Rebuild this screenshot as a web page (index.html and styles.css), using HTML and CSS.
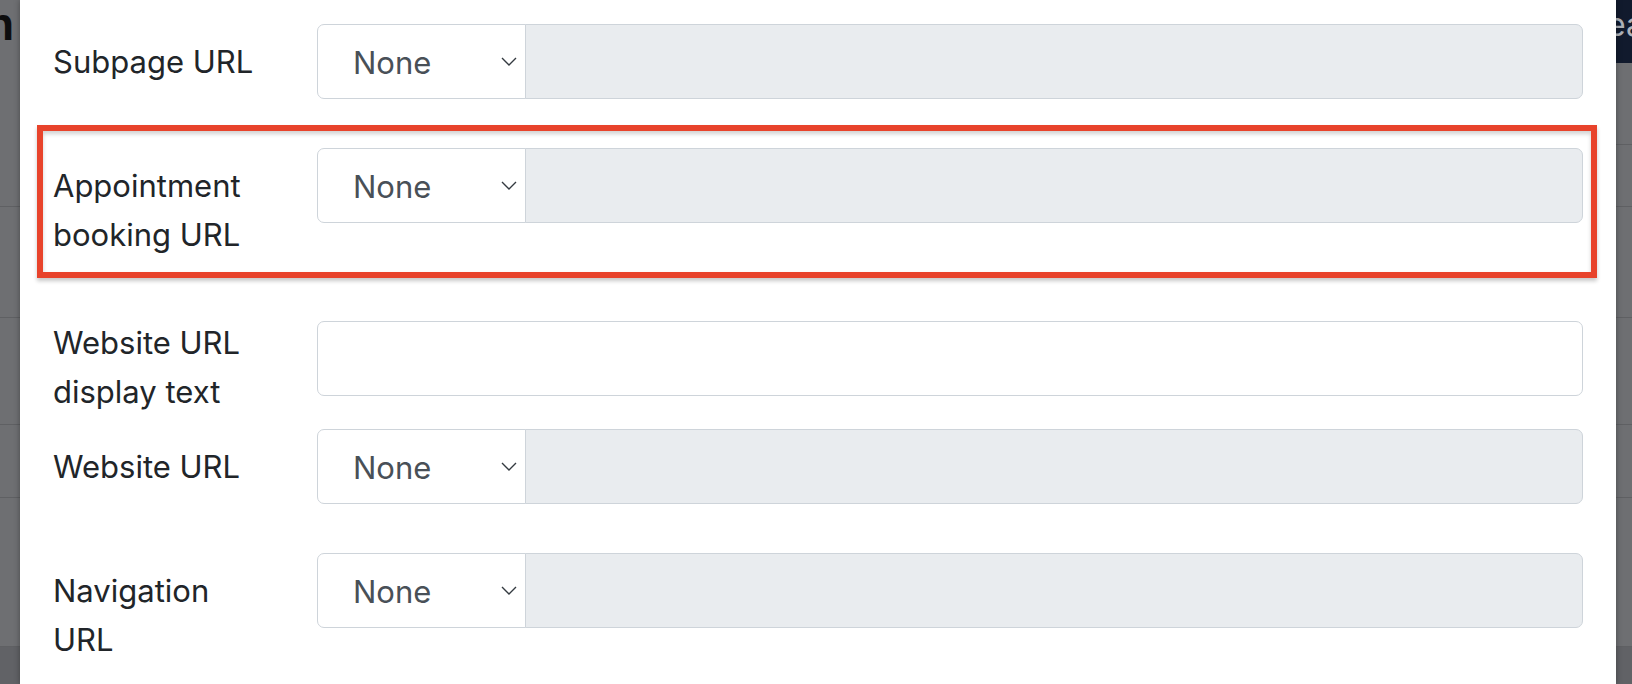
FILE: index.html
```html
<!DOCTYPE html>
<html lang="en">
<head>
<meta charset="utf-8">
<title>Edit links</title>
<link rel="stylesheet" href="styles.css">
</head>
<body>
<div class="page">
  <div class="backdrop backdrop-left">
    <div class="bg-block bg-h207"><span class="bg-heading">n</span></div>
    <div class="bg-block bg-h111"></div>
    <div class="bg-block bg-h107"></div>
    <div class="bg-block bg-h73"></div>
    <div class="bg-block bg-h149"></div>
    <div class="bg-footer"></div>
  </div>

  <div class="modal">
    <div class="form-row">
      <div class="form-label">Subpage URL</div>
      <div class="input-group">
        <div class="select">None<svg class="chevron" viewBox="0 0 16 9" width="16" height="9"><path d="M1 1l7 7 7-7" fill="none" stroke="#343a40" stroke-width="1.4"/></svg></div>
        <div class="addon"></div>
      </div>
    </div>

    <div class="form-row highlighted">
      <div class="form-label">Appointment booking URL</div>
      <div class="input-group">
        <div class="select">None<svg class="chevron" viewBox="0 0 16 9" width="16" height="9"><path d="M1 1l7 7 7-7" fill="none" stroke="#343a40" stroke-width="1.4"/></svg></div>
        <div class="addon"></div>
      </div>
    </div>

    <div class="form-row form-row-tight">
      <div class="form-label form-label-flush">Website URL display text</div>
      <div class="input-group">
        <div class="text-input"></div>
      </div>
    </div>

    <div class="form-row">
      <div class="form-label">Website URL</div>
      <div class="input-group">
        <div class="select">None<svg class="chevron" viewBox="0 0 16 9" width="16" height="9"><path d="M1 1l7 7 7-7" fill="none" stroke="#343a40" stroke-width="1.4"/></svg></div>
        <div class="addon"></div>
      </div>
    </div>

    <div class="form-row">
      <div class="form-label">Navigation URL</div>
      <div class="input-group">
        <div class="select">None<svg class="chevron" viewBox="0 0 16 9" width="16" height="9"><path d="M1 1l7 7 7-7" fill="none" stroke="#343a40" stroke-width="1.4"/></svg></div>
        <div class="addon"></div>
      </div>
    </div>
  </div>

  <div class="backdrop backdrop-right">
    <div class="bg-nav"><span class="bg-nav-text">ea</span></div>
    <div class="bg-block bg-h82"></div>
    <div class="bg-block bg-h62"></div>
    <div class="bg-block bg-h111"></div>
    <div class="bg-block bg-h107"></div>
    <div class="bg-block bg-h73"></div>
    <div class="bg-block bg-h149"></div>
    <div class="bg-footer"></div>
  </div>
</div>
</body>
</html>
```

FILE: styles.css
```css
html, body {
  margin: 0;
  padding: 0;
}

body {
  width: 1632px;
  height: 684px;
  overflow: hidden;
  background: #6e6f72;
  font-family: Inter, "Noto Sans", "Liberation Sans", sans-serif;
}

.page {
  display: flex;
  height: 684px;
}

/* Dimmed page behind the modal */
.backdrop {
  flex: none;
  display: flex;
  flex-direction: column;
  overflow: hidden;
  background: #6e6f72;
}

.backdrop-left {
  width: 20px;
}

.backdrop-right {
  width: 16px;
}

.bg-block {
  flex: none;
  box-sizing: border-box;
  border-bottom: 1px solid #5f6063;
}

.bg-h207 { height: 207px; }
.bg-h111 { height: 111px; }
.bg-h107 { height: 107px; }
.bg-h73  { height: 73px; }
.bg-h149 { height: 149px; }
.bg-h82  { height: 82px; }
.bg-h62  { height: 62px; }

.bg-footer {
  flex: 1;
  background: #616266;
}

.bg-heading {
  display: block;
  margin: 1px 0 0 -14px;
  font-family: "Liberation Sans", Arial, sans-serif;
  font-size: 46px;
  font-weight: 700;
  line-height: 46px;
  color: #0d0d0e;
  white-space: nowrap;
}

.bg-nav {
  flex: none;
  height: 63px;
  background: #111a2d;
  overflow: hidden;
}

.bg-nav-text {
  display: block;
  margin: 5px 0 0 -9px;
  font-size: 32px;
  line-height: 40px;
  color: #aeb2b9;
  white-space: nowrap;
}

/* Modal */
.modal {
  flex: 1;
  background: #ffffff;
  padding: 24px 33px 0 33px;
  box-shadow: 0 0 6px rgba(0, 0, 0, 0.35);
  position: relative;
  z-index: 1;
}

.form-row {
  display: flex;
  align-items: flex-start;
  margin-bottom: 49px;
}

.form-row-tight {
  margin-bottom: 0;
}

.form-label {
  flex: none;
  width: 264px;
  box-sizing: border-box;
  padding: 13px 50px 13px 0;
  font-size: 31px;
  line-height: 49px;
  color: #212529;
}

.form-label-flush {
  padding-top: 0;
  margin-top: -3px;
}

.input-group {
  flex: 1;
  display: flex;
  height: 75px;
}

.select {
  flex: none;
  width: 209px;
  box-sizing: border-box;
  display: flex;
  align-items: center;
  justify-content: space-between;
  padding: 2px 8px 0 35px;
  border: 1px solid #ced4da;
  border-radius: 7px 0 0 7px;
  background: #ffffff;
  font-size: 31px;
  color: #495057;
}

.chevron {
  flex: none;
  margin-top: -2px;
}

.addon {
  flex: 1;
  border: 1px solid #ced4da;
  margin-left: -1px;
  border-radius: 0 7px 7px 0;
  background: #e9ecef;
}

.text-input {
  flex: 1;
  border: 1px solid #ced4da;
  border-radius: 7px;
  background: #ffffff;
}

/* Red annotation frame around the highlighted row */
.highlighted {
  position: relative;
}

.highlighted::after {
  content: "";
  position: absolute;
  top: -23px;
  left: -16px;
  right: -14px;
  bottom: -6px;
  border: 6px solid #e8432b;
  box-shadow: 0 3px 4px rgba(0, 0, 0, 0.22), inset 0 3px 4px rgba(0, 0, 0, 0.18);
  pointer-events: none;
}
```
